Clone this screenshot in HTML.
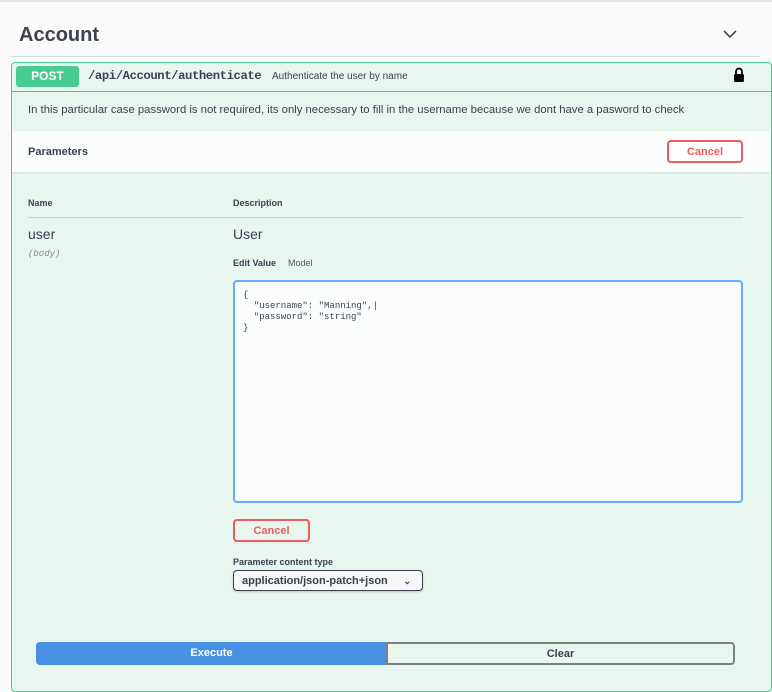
<!DOCTYPE html>
<html><head><style>
*{margin:0;padding:0;box-sizing:border-box}
body{width:772px;height:686px;background:#fafafa;font-family:"Liberation Sans",sans-serif;color:#3b4151;position:relative;overflow:hidden}
.a{position:absolute}
</style></head><body>
<div class="a" style="left:0;top:0;width:772px;height:2px;background:#e6e6e6"></div>
<div class="a" style="left:19px;top:24px;font-size:20px;font-weight:bold;color:#3b4151">Account</div>
<svg class="a" style="left:722px;top:28px" width="16" height="12"><path d="M2 3 L8 9 L14 3" stroke="#333" stroke-width="1.5" fill="none"/></svg>
<div class="a" style="left:11px;top:56px;width:749px;height:1px;background:#d8d8d8"></div>
<div class="a" style="left:11px;top:62px;width:761px;height:630px;background:#e8f6f0;border:1px solid #49cc90;border-radius:4px"></div>
<div class="a" style="left:12px;top:91px;width:759px;height:1px;background:#49cc90"></div>
<div class="a" style="left:16px;top:66px;width:63px;height:21px;background:#49cc90;border-radius:3px;color:#fff;font-weight:bold;font-size:12px;text-align:center;line-height:21px">POST</div>
<div class="a" style="left:88px;top:69px;font-family:'Liberation Mono',monospace;font-size:12.3px;font-weight:bold;color:#3b4151;letter-spacing:-0.45px">/api/Account/authenticate</div>
<div class="a" style="left:272px;top:71px;font-size:10px;color:#3b4151">Authenticate the user by name</div>
<svg class="a" style="left:732px;top:67px" width="14" height="16"><path d="M4 7 V4.5 A3 3 0 0 1 10 4.5 V7" stroke="#000" stroke-width="1.8" fill="none"/><rect x="2" y="7" width="10" height="8" rx="1.5" fill="#000"/></svg>
<div class="a" style="left:28px;top:104px;font-size:11.3px;color:#3b4151">In this particular case password is not required, its only necessary to fill in the username because we dont have a pasword to check</div>
<div class="a" style="left:12px;top:131px;width:759px;height:41px;background:#fbfdfc;box-shadow:0 1px 2px rgba(0,0,0,.1)"></div>
<div class="a" style="left:28px;top:146px;font-size:11px;font-weight:bold">Parameters</div>
<div class="a" style="left:667px;top:140px;width:76px;height:23px;border:2px solid #f05a5a;border-radius:4px;background:#fff;color:#f05a5a;font-size:11px;font-weight:bold;text-align:center;line-height:21px">Cancel</div>
<div class="a" style="left:28px;top:198px;font-size:9px;font-weight:bold">Name</div>
<div class="a" style="left:233px;top:198px;font-size:9px;font-weight:bold">Description</div>
<div class="a" style="left:28px;top:217px;width:715px;height:1px;background:#c8d3cd"></div>
<div class="a" style="left:28px;top:226px;font-size:14px">user</div>
<div class="a" style="left:28px;top:249px;font-size:9px;font-style:italic;color:#888;font-family:'Liberation Mono',monospace">(body)</div>
<div class="a" style="left:233px;top:226px;font-size:14px">User</div>
<div class="a" style="left:233px;top:258px;font-size:9px;font-weight:bold">Edit Value</div>
<div class="a" style="left:288px;top:258px;font-size:9px;color:#555">Model</div>
<div class="a" style="left:233px;top:280px;width:510px;height:223px;background:#fbfdfc;border:2px solid #61affe;border-radius:4px"></div>
<pre class="a" style="left:243px;top:290px;font-family:'Liberation Mono',monospace;font-size:9px;line-height:11px;color:#3b4151">{
  "username": "Manning",|
  "password": "string"
}</pre>
<div class="a" style="left:233px;top:519px;width:77px;height:23px;border:2px solid #f05a5a;border-radius:4px;color:#f05a5a;font-size:11px;font-weight:bold;text-align:center;line-height:21px">Cancel</div>
<div class="a" style="left:233px;top:557px;font-size:9px;font-weight:bold">Parameter content type</div>
<div class="a" style="left:233px;top:570px;width:190px;height:21px;border:1px solid #3b4151;border-radius:4px;background:#f7f7f7;box-shadow:0 1px 2px rgba(0,0,0,.2);font-size:11px;font-weight:bold;line-height:20px;padding-left:8px">application/json-patch+json<span style="position:absolute;right:11px;font-size:9px">&#8964;</span></div>
<div class="a" style="left:36px;top:642px;width:351px;height:23px;background:#4990e2;border-radius:4px 0 0 4px;color:#fff;font-size:11px;font-weight:bold;text-align:center;line-height:23px">Execute</div>
<div class="a" style="left:386px;top:642px;width:349px;height:23px;border:2px solid #808080;border-radius:0 4px 4px 0;background:#e8f6f0;font-size:11px;font-weight:bold;text-align:center;line-height:20px">Clear</div>
</body></html>
